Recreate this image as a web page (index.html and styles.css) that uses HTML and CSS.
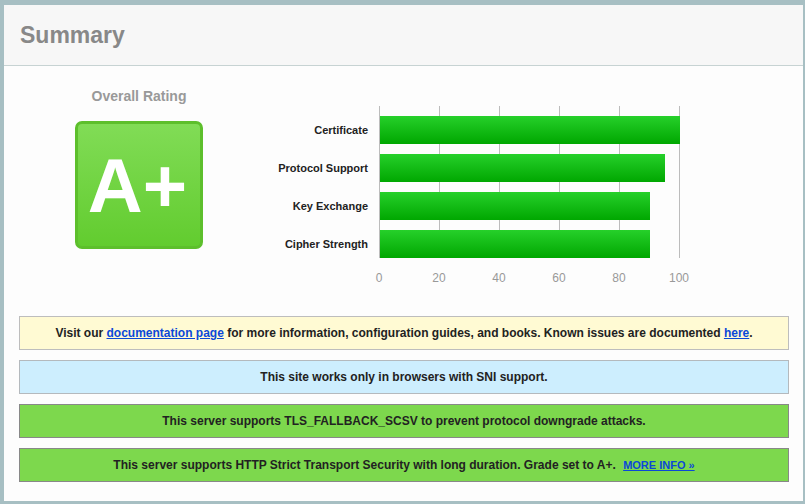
FILE: index.html
```html
<!DOCTYPE html>
<html>
<head>
<meta charset="utf-8">
<link rel="stylesheet" href="styles.css">
</head>
<body>
<div class="panel">
  <div class="header"><h1>Summary</h1></div>
  <div class="content">
    <div class="top">
      <div class="rating">
        <div class="rating-title">Overall Rating</div>
        <div class="grade">A+</div>
      </div>
      <div class="chart">
        <div class="rows">
          <div class="row"><div class="label">Certificate</div><div class="track"><div class="bar" style="width:300px"></div></div></div>
          <div class="row"><div class="label">Protocol Support</div><div class="track"><div class="bar" style="width:285px"></div></div></div>
          <div class="row"><div class="label">Key Exchange</div><div class="track"><div class="bar" style="width:270px"></div></div></div>
          <div class="row"><div class="label">Cipher Strength</div><div class="track"><div class="bar" style="width:270px"></div></div></div>
        </div>
        <div class="axis">
          <span>0</span><span>20</span><span>40</span><span>60</span><span>80</span><span>100</span>
        </div>
      </div>
    </div>
    <div class="notices">
      <div class="notice yellow">Visit our <a href="#">documentation page</a> for more information, configuration guides, and books. Known issues are documented <a href="#">here</a>.</div>
      <div class="notice blue">This site works only in browsers with SNI support.</div>
      <div class="notice green">This server supports TLS_FALLBACK_SCSV to prevent protocol downgrade attacks.</div>
      <div class="notice green">This server supports HTTP Strict Transport Security with long duration. Grade set to A+. <a class="more" href="#">MORE INFO »</a></div>
    </div>
  </div>
</div>
</body>
</html>
```
FILE: styles.css
```css
html, body {
  margin: 0;
  padding: 0;
}
body {
  background: #a7bfc3;
  padding: 5px 2px 3px 4px;
  width: 805px;
  height: 504px;
  box-sizing: border-box;
  font-family: "Liberation Sans", Arial, sans-serif;
  overflow: hidden;
}
.panel {
  height: 496px;
  background: #fdfdfd;
  display: flex;
  flex-direction: column;
}
.header {
  height: 60px;
  background: #f7f7f7;
  border-bottom: 1px solid #c7d3d3;
  padding-left: 16px;
  display: flex;
  align-items: center;
}
.header h1 {
  margin: 0;
  font-size: 23px;
  font-weight: bold;
  color: #888;
}
.content {
  flex: 1;
}
.top {
  display: flex;
  height: 250px;
}
.rating {
  margin-left: 71px;
  width: 128px;
  padding-top: 22px;
  display: flex;
  flex-direction: column;
  align-items: center;
}
.rating-title {
  font-size: 14px;
  font-weight: bold;
  color: #999;
  line-height: 17px;
}
.grade {
  margin-top: 16px;
  width: 128px;
  height: 128px;
  box-sizing: border-box;
  border: 3px solid #5dbf2c;
  border-radius: 7px;
  background: linear-gradient(to bottom, #81dc56, #62cc2f);
  color: #fff;
  font-size: 76px;
  font-weight: bold;
  display: flex;
  align-items: center;
  justify-content: center;
  line-height: 1;
  padding-right: 3px;
  padding-top: 2px;
}
.chart {
  margin-left: 20px;
  margin-top: 40px;
}
.rows {
  display: flex;
  flex-direction: column;
  gap: 10px;
  padding-top: 10px;
}
.row {
  display: flex;
  align-items: center;
  height: 28px;
}
.label {
  width: 156px;
  padding-right: 11px;
  box-sizing: border-box;
  text-align: right;
  font-size: 11px;
  font-weight: bold;
  color: #222;
}
.track {
  width: 301px;
  height: 38px;
  margin: -10px 0 0;
  padding-top: 10px;
  box-sizing: border-box;
  background: repeating-linear-gradient(to right, #bcbcbc 0 1px, transparent 1px 60px);
}
.bar {
  height: 28px;
  margin-left: 1px;
  background: linear-gradient(to bottom, #26d02a, #00a700);
}
.axis {
  display: flex;
  margin-left: 126px;
  margin-top: 13px;
}
.axis span {
  width: 60px;
  text-align: center;
  font-size: 12px;
  color: #999;
  line-height: 14px;
}
.notices {
  margin: 0 14px 0 15px;
  display: flex;
  flex-direction: column;
  gap: 10px;
}
.notice {
  height: 34px;
  box-sizing: border-box;
  display: flex;
  align-items: center;
  justify-content: center;
  font-size: 12px;
  font-weight: bold;
  color: #222;
  white-space: pre;
}
.notice a {
  color: #0b48d8;
  text-decoration: underline;
}
.yellow {
  background: #fffad3;
  border: 1px solid #bdbdbd;
}
.blue {
  background: #cdeefe;
  border: 1px solid #b4b9bd;
}
.green {
  background: #7dd84d;
  border: 1px solid #888;
}
.notice a.more {
  font-size: 11px;
  margin-left: 4px;
}
```
